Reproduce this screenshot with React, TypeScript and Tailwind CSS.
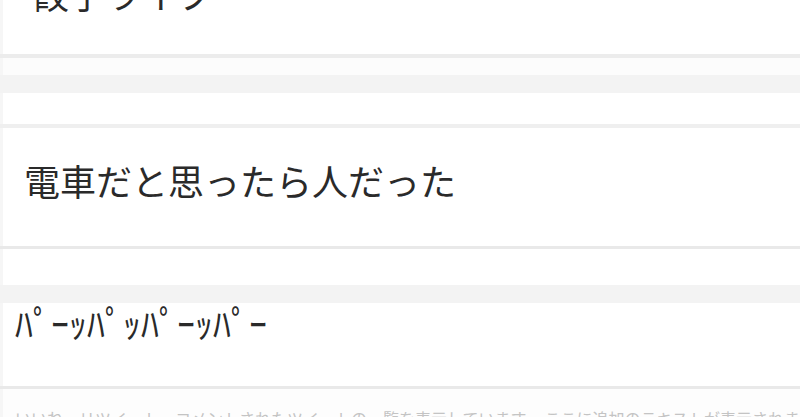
import React from "react";

const font = { fontFamily: '"Noto Sans CJK JP", "Noto Sans", sans-serif' };

export default function App() {
  return (
    <div className="w-[800px] h-[417px] overflow-hidden bg-white flex flex-col" style={font}>
      <div className="h-[54px] shrink-0 border-l-[3px] border-[#f6f6f6] bg-white overflow-hidden">
        <div className="mt-[-25px] pl-[30px] text-[36px] leading-[36px] text-[#2a2a2a]">餃子ライブ</div>
      </div>
      <div className="h-[4px] shrink-0 bg-[#ececec]" />
      <div className="h-[17px] shrink-0 border-l-[3px] border-[#f6f6f6] bg-[#fcfcfc]" />
      <div className="h-[18px] shrink-0 bg-[#f3f3f3]" />
      <div className="h-[31px] shrink-0 border-l-[3px] border-[#f6f6f6] bg-white" />
      <div className="h-[4px] shrink-0 bg-[#efefef]" />
      <div className="h-[118px] shrink-0 border-l-[3px] border-[#f6f6f6] bg-white">
        <div className="pt-[34px] pl-[21px] text-[36px] leading-[36px] text-[#2a2a2a]">電車だと思ったら人だった</div>
      </div>
      <div className="h-[3px] shrink-0 bg-[#e9e9e9]" />
      <div className="h-[36px] shrink-0 border-l-[3px] border-[#f6f6f6] bg-white" />
      <div className="h-[18px] shrink-0 bg-[#f3f3f3]" />
      <div className="h-[83px] shrink-0 border-l-[3px] border-[#f6f6f6] bg-white">
        <div className="pt-[1px] pl-[12px] text-[36px] leading-[36px] text-[#2a2a2a]">ﾊﾟｰｯﾊﾟｯﾊﾟｰｯﾊﾟｰ</div>
      </div>
      <div className="h-[3px] shrink-0 bg-[#e9e9e9]" />
      <div className="flex-1 border-l-[3px] border-[#f6f6f6] bg-[#fdfdfd] overflow-hidden">
        <div className="pt-[19px] pl-[12px] text-[16px] leading-[20px] text-[#c4c4c4] whitespace-nowrap">
          いいね・リツイート・コメントされたツイートの一覧を表示しています。 ここに追加のテキストが表示されます
        </div>
      </div>
    </div>
  );
}
